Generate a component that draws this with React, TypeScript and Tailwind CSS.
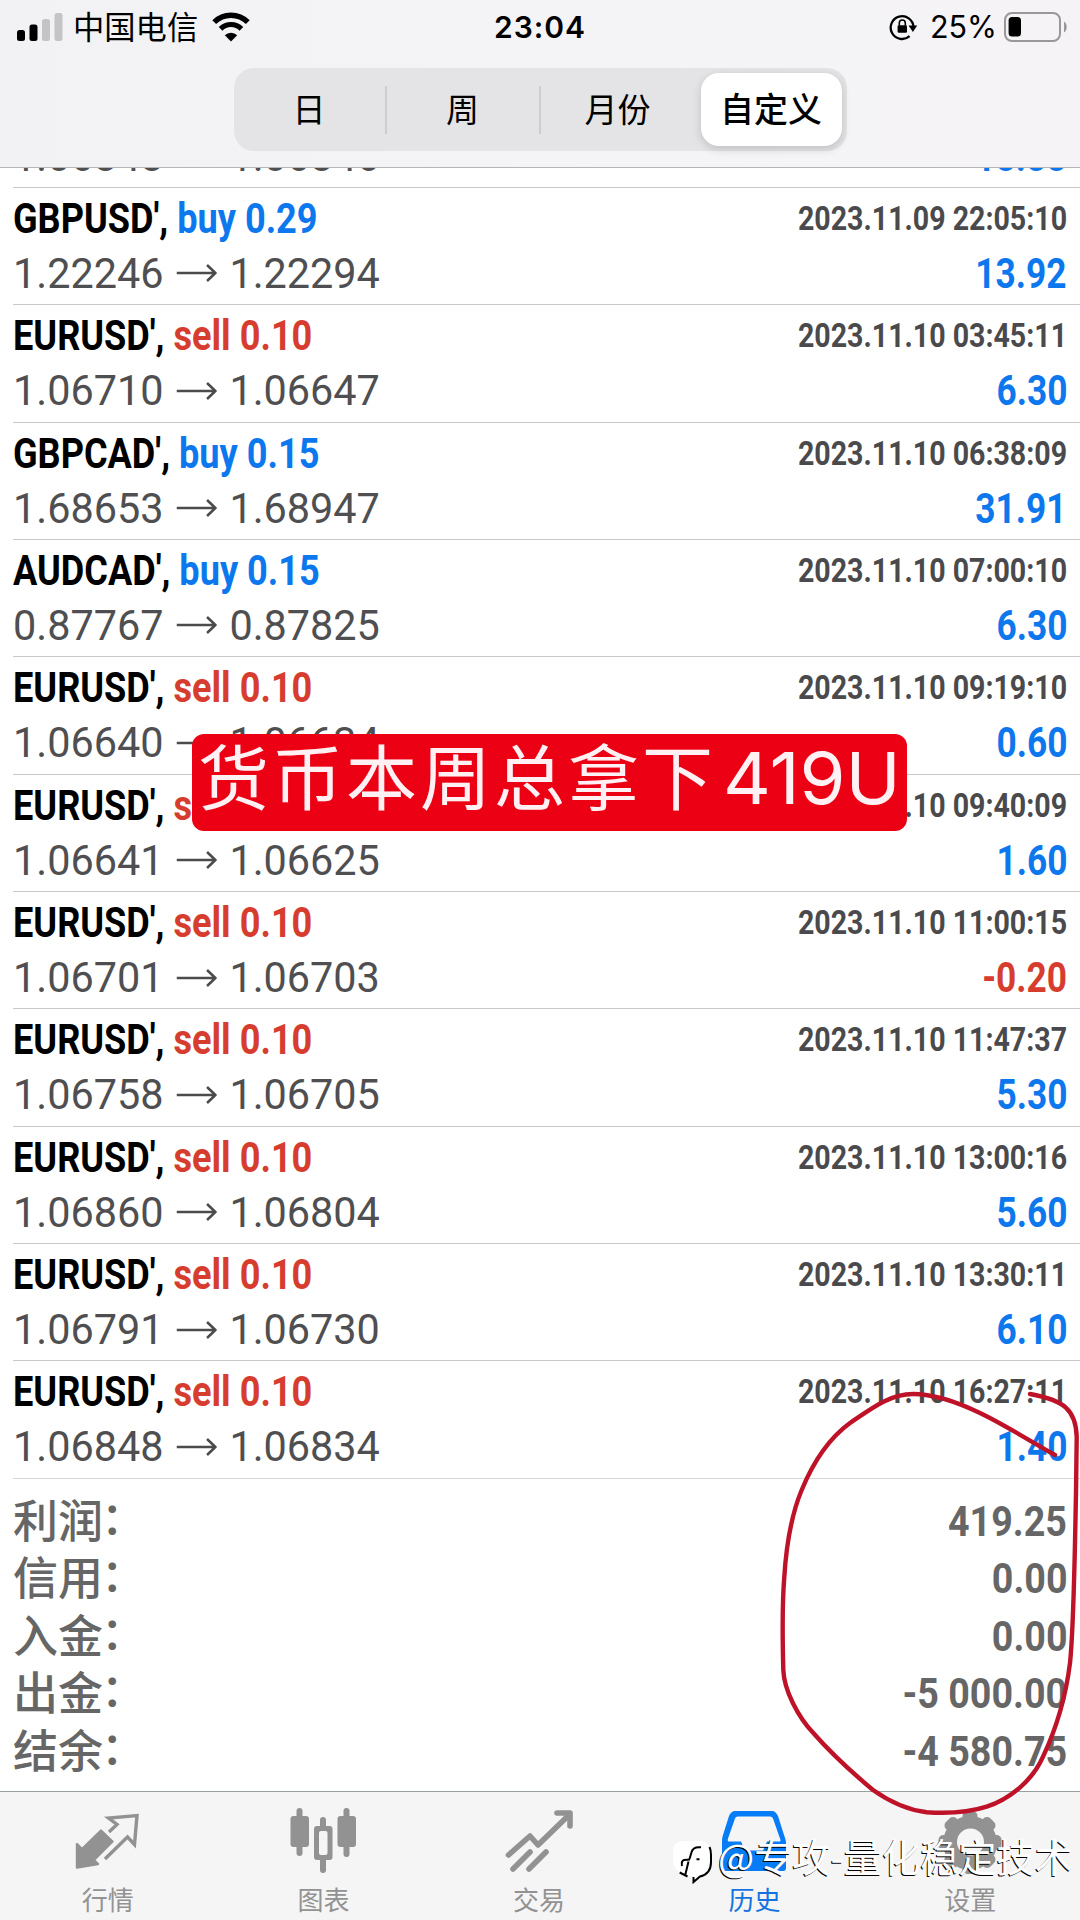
import type { ReactNode } from "react";
import clsx from "clsx";

interface Deal {
    symbol: string;
    side: "buy" | "sell";
    volume: string;
    open: string;
    close: string;
    time: string;
    profit: string;
}

const deals: Deal[] = [
    { symbol: "EURUSD'", side: "sell", volume: "0.29", open: "1.06848", close: "1.06846", time: "2023.11.09 20:15:10", profit: "18.88" },
    { symbol: "GBPUSD'", side: "buy", volume: "0.29", open: "1.22246", close: "1.22294", time: "2023.11.09 22:05:10", profit: "13.92" },
    { symbol: "EURUSD'", side: "sell", volume: "0.10", open: "1.06710", close: "1.06647", time: "2023.11.10 03:45:11", profit: "6.30" },
    { symbol: "GBPCAD'", side: "buy", volume: "0.15", open: "1.68653", close: "1.68947", time: "2023.11.10 06:38:09", profit: "31.91" },
    { symbol: "AUDCAD'", side: "buy", volume: "0.15", open: "0.87767", close: "0.87825", time: "2023.11.10 07:00:10", profit: "6.30" },
    { symbol: "EURUSD'", side: "sell", volume: "0.10", open: "1.06640", close: "1.06634", time: "2023.11.10 09:19:10", profit: "0.60" },
    { symbol: "EURUSD'", side: "sell", volume: "0.10", open: "1.06641", close: "1.06625", time: "2023.11.10 09:40:09", profit: "1.60" },
    { symbol: "EURUSD'", side: "sell", volume: "0.10", open: "1.06701", close: "1.06703", time: "2023.11.10 11:00:15", profit: "-0.20" },
    { symbol: "EURUSD'", side: "sell", volume: "0.10", open: "1.06758", close: "1.06705", time: "2023.11.10 11:47:37", profit: "5.30" },
    { symbol: "EURUSD'", side: "sell", volume: "0.10", open: "1.06860", close: "1.06804", time: "2023.11.10 13:00:16", profit: "5.60" },
    { symbol: "EURUSD'", side: "sell", volume: "0.10", open: "1.06791", close: "1.06730", time: "2023.11.10 13:30:11", profit: "6.10" },
    { symbol: "EURUSD'", side: "sell", volume: "0.10", open: "1.06848", close: "1.06834", time: "2023.11.10 16:27:11", profit: "1.40" },
];

const totals = [
    { label: "利润", value: "419.25" },
    { label: "信用", value: "0.00" },
    { label: "入金", value: "0.00" },
    { label: "出金", value: "-5 000.00" },
    { label: "结余", value: "-4 580.75" },
];

function StatusBar() {
    return (
        <div className="flex h-[54px] items-center justify-between pl-[17px] pr-[12px] text-black">
            <div className="flex w-[400px] items-center">
                <svg width="46" height="30" viewBox="0 0 46 30">
                    <rect x="0" y="18" width="8" height="11" rx="2.5" />
                    <rect x="12.5" y="12.5" width="8" height="16.5" rx="2.5" />
                    <rect x="25" y="7" width="8" height="22" rx="2.5" fill="#c4c4c6" />
                    <rect x="37.5" y="1" width="8" height="28" rx="2.5" fill="#c4c4c6" />
                </svg>
                <span className="-mt-[2px] ml-[10px] font-['Noto_Sans_CJK_SC',sans-serif] text-[31.3px] leading-[46px]">中国电信</span>
                <svg className="ml-[13px]" width="40" height="30" viewBox="0 0 40 30">
                    <path d="M3.2 10.2a23.7 23.7 0 0 1 33.6 0" fill="none" stroke="#000" strokeWidth="5.4" />
                    <path d="M9.6 16.8a14.7 14.7 0 0 1 20.8 0" fill="none" stroke="#000" strokeWidth="5.2" />
                    <path d="M20 29.5l-6.2-6.3a8.8 8.8 0 0 1 12.4 0z" />
                </svg>
            </div>
            <span className="-ml-[5px] font-['Inter',sans-serif] text-[30px] font-semibold leading-none tracking-[1px]">23:04</span>
            <div className="flex w-[400px] items-center justify-end">
                <svg width="29" height="28" viewBox="0 0 29 28">
                    <path d="M20.6 23.2A11.4 11.4 0 1 1 24.5 14" fill="none" stroke="#000" strokeWidth="2.3" />
                    <path d="M19.6 12.6h8.6l-4.3 6.4z" />
                    <rect x="8.6" y="12.2" width="9.4" height="7.6" rx="1.2" />
                    <path d="M10.3 12.5V10a3 3 0 0 1 6 0v2.5" fill="none" stroke="#000" strokeWidth="1.6" />
                </svg>
                <span className="ml-[12px] font-['Inter',sans-serif] text-[30.5px] leading-none">25%</span>
                <svg className="ml-[7px]" width="64" height="30" viewBox="0 0 64 30">
                    <rect x="1" y="1" width="55" height="28" rx="7" fill="none" stroke="#9b9799" strokeWidth="2" />
                    <rect x="4.6" y="5" width="12.4" height="19.5" rx="3.5" />
                    <path d="M60 9.5c3.6 2 3.6 9 0 11z" fill="#9b9799" />
                </svg>
            </div>
        </div>
    );
}

function PeriodTabs() {
    return (
        <div className="mx-auto mt-[14px] flex h-[83px] w-[613px] items-center rounded-[20px] bg-[#e4e4e6] font-['Noto_Sans_CJK_SC',sans-serif] text-[33px] leading-[48px] text-black">
            <div className="flex h-12 w-[153px] items-center justify-center border-r-2 border-[#cdcdd0] pb-[3px]">日</div>
            <div className="flex h-12 w-[154px] items-center justify-center border-r-2 border-[#cdcdd0] pb-[3px]">周</div>
            <div className="flex h-12 w-[160px] items-center justify-center pb-[3px] pr-1.5">月份</div>
            <div className="flex h-[73px] w-[141px] items-center justify-center rounded-[18px] bg-white pb-[3px] text-[34px] font-medium shadow-[0_3px_10px_rgba(0,0,0,0.16)]">
                自定义
            </div>
        </div>
    );
}

function DealRow({ deal }: { deal: Deal }) {
    return (
        <div className="ml-[13px] h-[117.36px] shrink-0 whitespace-nowrap border-b border-[#c9c9cb] pr-[13px] pt-[3px] font-['Roboto',sans-serif]">
            <div className="flex h-[55px] justify-between font-bold">
                <div className="origin-left scale-x-[0.86] text-[42px] leading-[55px] text-black">
                    {deal.symbol},{" "}
                    <span className={deal.side === "buy" ? "text-[#0d78ee]" : "text-[#d63d2e]"}>
                        {deal.side} {deal.volume}
                    </span>
                </div>
                <div className="origin-right scale-x-[0.865] text-[33px] leading-[55px] text-[#4a4a4d]">{deal.time}</div>
            </div>
            <div className="flex h-[55px] justify-between text-[42px] leading-[55px]">
                <div className="flex origin-left scale-x-[0.985] items-center text-[#4f4f51]">
                    <span>{deal.open}</span>
                    <svg className="mx-[13px]" width="41" height="20" viewBox="0 0 41 20">
                        <path d="M0 10h39M31 2l8.500 8-8.500 8" fill="none" stroke="#4b4b4d" strokeWidth="2.6" />
                    </svg>
                    <span>{deal.close}</span>
                </div>
                <div
                    className={clsx(
                        "origin-right scale-x-[0.84] font-bold",
                        deal.profit.startsWith("-") ? "text-[#d63d2e]" : "text-[#0d78ee]"
                    )}
                >
                    {deal.profit}
                </div>
            </div>
        </div>
    );
}

function Tab({ label, active, children }: { label: string; active?: boolean; children: ReactNode }) {
    return (
        <div className={clsx("flex w-[215.8px] flex-col items-center", active ? "text-[#1473e0]" : "text-[#929292]")}>
            <svg width="72" height="72" viewBox="0 0 72 72" fill="currentColor">
                {children}
            </svg>
            <span className="mt-[4px] font-['Noto_Sans_CJK_SC',sans-serif] text-[26px] leading-[38px]">{label}</span>
        </div>
    );
}

function TabBar() {
    return (
        <nav className="flex h-[129px] border-t border-[#9a9f9f] bg-[#f5f5f6] pr-[2px] pt-[12px]">
            <Tab label="行情">
                <path d="M5 40v23.500l21-3.500-4-4L40.500 37.500 29 26.500 10 45z" stroke="currentColor" strokeWidth="2.4" strokeLinejoin="round" />
                <path d="M37 28l8-7.500-8.500-6.500 28.500-2.500-2.500 29L55.500 33 33 55" fill="none" stroke="currentColor" strokeWidth="3.4" />
            </Tab>
            <Tab label="图表">
                <rect x="9.5" y="4" width="6" height="48" rx="3" />
                <rect x="3.5" y="12" width="18.5" height="31" rx="3" />
                <rect x="56.5" y="4" width="6" height="49" rx="3" />
                <rect x="50.5" y="12" width="18.5" height="31" rx="3" />
                <rect x="33" y="13" width="6" height="56" rx="3" />
                <rect x="27" y="22" width="18.5" height="34" rx="3" />
                <rect x="32" y="27" width="8.5" height="24" rx="2" fill="#f5f5f6" />
            </Tab>
            <Tab label="交易">
                <g fill="none" stroke="currentColor" strokeWidth="5.6" strokeLinecap="round" strokeLinejoin="round">
                    <path d="M5.500 51L27 32l8 9L66 11" />
                    <path d="M54 9h13v13" />
                    <path d="M10 65l17-17M26 65l17-17" />
                </g>
            </Tab>
            <Tab label="历史" active>
                <path
                    fillRule="evenodd"
                    fill="#067df7"
                    transform="translate(-1 2)"
                    d="M18 5h36c3 0 4.500 2 6 5l6 19c1 3 2 5 2 8v25c0 2-1 3-3 3H7c-2 0-3-1-3-3V37c0-3 0-5 1-8l6-19c1.500-3 3-5 7-5zM20 10.500c-2 0-2.500 1-3 2l-7 20c-.6 2 0 3 1 3h12l4 9h18l4-9h12c1.500 0 2-1 1-3l-7-20c-.5-1-1-2-3-2z"
                />
            </Tab>
            <Tab label="设置">
                <circle cx="36" cy="39" r="27" />
                <rect x="28.500" y="7" width="15" height="63" rx="5" />
                <rect x="28.500" y="7" width="15" height="63" rx="5" transform="rotate(45 36 38.500)" />
                <rect x="28.500" y="7" width="15" height="63" rx="5" transform="rotate(90 36 38.500)" />
                <rect x="28.500" y="7" width="15" height="63" rx="5" transform="rotate(135 36 38.500)" />
                <circle cx="36.500" cy="38" r="13.500" fill="#f5f5f6" />
            </Tab>
        </nav>
    );
}

export default function App() {
    return (
        <div className="relative flex h-[1920px] w-[1080px] flex-col overflow-hidden bg-white">
            <header className="h-[168px] shrink-0 border-b border-[#b5b5b7] bg-linear-to-r from-[#f2f2f4] via-[#f4f4f6] to-[#f5f3f5]">
                <StatusBar />
                <PeriodTabs />
            </header>

            <main className="flex min-h-0 flex-1 flex-col overflow-hidden">
                <div className="-mt-[97.500px] flex flex-col [clip-path:inset(97.500px_0_0_0)]">
                    {deals.map((deal) => (
                        <DealRow key={deal.time} deal={deal} />
                    ))}
                </div>
                <div className="flex flex-col px-[13px] pt-[12px] text-[#666666]">
                    {totals.map((row) => (
                        <div key={row.label} className="flex h-[57.5px] items-center justify-between whitespace-nowrap">
                            <span className="-mt-[3px] font-['Noto_Sans_CJK_SC',sans-serif] text-[45px] font-medium leading-[57px]">
                                {row.label}
                                <span className="relative -left-[2px] -top-[3px]">：</span>
                            </span>
                            <span className="origin-right scale-x-[0.875] pt-[3px] font-['Roboto',sans-serif] text-[43px] font-bold leading-[57px]">
                                {row.value}
                            </span>
                        </div>
                    ))}
                </div>
            </main>

            <TabBar />

            {/* caption sticker */}
            <div className="absolute left-[192px] top-[734px] flex h-[97px] w-[715px] whitespace-nowrap rounded-[12px] bg-[#ec0014] pl-[6px] text-[#fff0f3]">
                <span className="-mt-[4px] font-['Noto_Sans_CJK_SC',sans-serif] text-[71px] leading-[86px] tracking-[3px]">货币本周总拿下</span>
                <span className="ml-[7px] origin-left scale-x-[1.03] font-['Inter',sans-serif] text-[72px] leading-[88px]">419U</span>
            </div>

            {/* hand-drawn loop around the totals */}
            <svg className="absolute left-0 top-0" width="1080" height="1920" viewBox="0 0 1080 1920" fill="none">
                <path
                    d="M1055 1455C1030 1441 1005 1425 980 1413C955 1401 930 1394 913 1394C890 1394 872 1408 850 1423C828 1439 812 1465 801.700 1490C790 1518 786 1550 784.300 1577C782 1605 782.500 1640 783.300 1670C784 1690 798 1717 813.300 1733C830 1752 855 1775 873 1790C890 1802 908 1810 926.700 1812.300C945 1813.500 967 1813 986.700 1806.700C1010 1799 1033 1780 1043 1756.700C1057 1727 1066 1695 1070 1663C1074 1625 1075 1540 1076 1493L1076.700 1437C1076 1410 1064 1400 1030 1394"
                    stroke="#bd1228"
                    strokeWidth="4.4"
                    strokeLinecap="round"
                />
            </svg>

            {/* watermark */}
            <div className="absolute left-[673px] top-[1836px] flex whitespace-nowrap text-white">
                <svg width="42" height="50" viewBox="0 0 42 50">
                    <path
                        d="M12 5h14q11 0 11 11v10q0 12-10 14.500L21 46l-1-6-5 0-8-4Q0 33 0 24V16Q0 5 12 5z"
                        fill="#fff"
                    />
                    <path
                        d="M36.500 11q1.500 3 1.500 8v7q0 12-11 14.500L20.500 46v-5M6.700 36.500l7.800 4M28 11.300q-8-1-9.500 5L16.500 23M9 30q-1-5 2-6l6-.5M15.500 25.500L12 40M23.500 23.300h3"
                        fill="none"
                        stroke="#000"
                        strokeWidth="2"
                    />
                </svg>
                <span className="-mt-[3px] ml-[3px] font-['Noto_Sans_CJK_SC',sans-serif] text-[38.2px] leading-[46px] [text-shadow:-1px_1px_0_#000]">
                    @专攻-量化稳定技术
                </span>
            </div>
        </div>
    );
}
